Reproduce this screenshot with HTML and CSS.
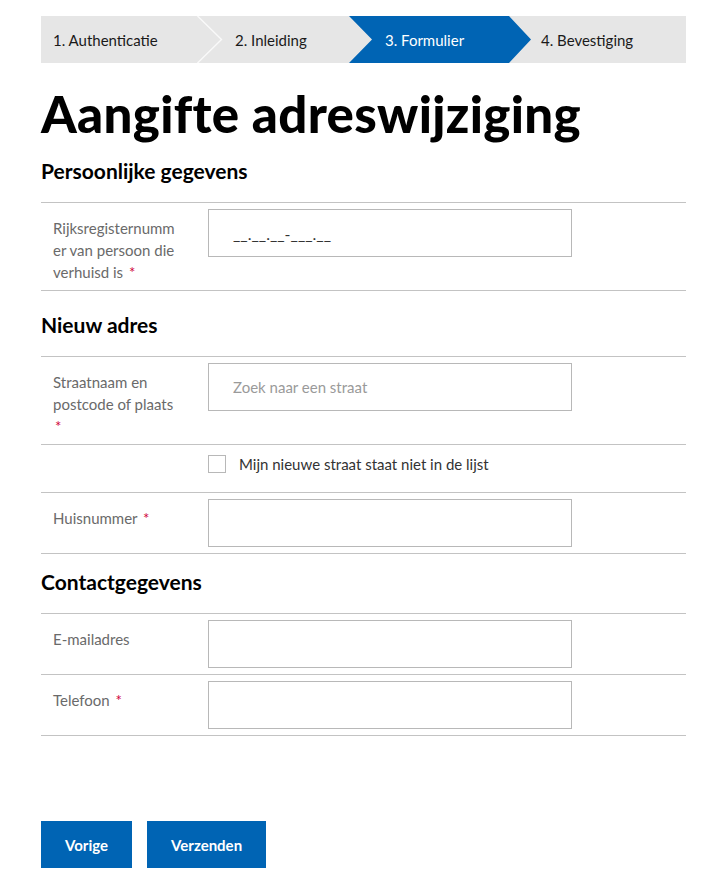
FILE: index.html
```html
<!DOCTYPE html>
<html lang="nl">
<head>
<meta charset="utf-8">
<title>Aangifte adreswijziging</title>
<link rel="stylesheet" href="styles.css">
</head>
<body>
<main class="page">
  <ol class="steps">
    <li class="step step-1">1. Authenticatie</li>
    <li class="step step-2">2. Inleiding</li>
    <li class="step step-3 is-active">3. Formulier</li>
    <li class="step step-4">4. Bevestiging</li>
  </ol>

  <h1 class="title">Aangifte adreswijziging</h1>

  <section class="fieldset">
    <h2 class="legend legend-first">Persoonlijke gegevens</h2>
    <div class="rows">
      <div class="row">
        <label class="label" for="rr">Rijksregisternummer van persoon die verhuisd is&nbsp;<span class="req">*</span></label>
        <div class="field"><input id="rr" class="input input-mask" type="text" value="__.__.__-___.__"></div>
      </div>
    </div>
  </section>

  <section class="fieldset">
    <h2 class="legend legend-mid">Nieuw adres</h2>
    <div class="rows">
      <div class="row">
        <label class="label" for="straat">Straatnaam en postcode of plaats <span class="req">*</span></label>
        <div class="field"><input id="straat" class="input" type="text" placeholder="Zoek naar een straat"></div>
      </div>
      <div class="row row-check">
        <div class="label"></div>
        <label class="check"><span class="box"></span><span class="check-text">Mijn nieuwe straat staat niet in de lijst</span></label>
      </div>
      <div class="row">
        <label class="label" for="nr">Huisnummer&nbsp;<span class="req">*</span></label>
        <div class="field"><input id="nr" class="input" type="text"></div>
      </div>
    </div>
  </section>

  <section class="fieldset">
    <h2 class="legend legend-last">Contactgegevens</h2>
    <div class="rows">
      <div class="row">
        <label class="label" for="mail">E-mailadres</label>
        <div class="field"><input id="mail" class="input" type="text"></div>
      </div>
      <div class="row">
        <label class="label" for="tel">Telefoon&nbsp;<span class="req">*</span></label>
        <div class="field"><input id="tel" class="input" type="text"></div>
      </div>
    </div>
  </section>

  <div class="actions">
    <button class="btn" type="button">Vorige</button>
    <button class="btn" type="button">Verzenden</button>
  </div>
</main>
</body>
</html>
```

FILE: styles.css
```css
* { box-sizing: border-box; }

html, body {
  margin: 0;
  padding: 0;
  background: #fff;
}

body {
  font-family: Lato, "Noto Sans", "Liberation Sans", sans-serif;
  color: #333;
}

.page {
  width: 645px;
  margin: 0 0 0 41px;
  padding-top: 16px;
}

/* Stepper */
.steps {
  list-style: none;
  margin: 0;
  padding: 0;
  display: flex;
  height: 47px;
  background: #e6e6e6;
}

.step {
  position: relative;
  display: flex;
  align-items: center;
  height: 47px;
  font-size: 15px;
  color: #1a1a1a;
  white-space: nowrap;
}

.step-1 { width: 156px; padding-left: 12px; }
.step-2 { width: 152px; padding-left: 38px; }
.step-3 { width: 182px; padding-left: 36px; }
.step-4 { flex: 1; padding-left: 32px; margin-left: -22px; }

.step-2::before {
  content: "";
  position: absolute;
  left: 0;
  top: 0;
  width: 26px;
  height: 47px;
  background: url("data:image/svg+xml,%3Csvg xmlns='http://www.w3.org/2000/svg' width='26' height='47'%3E%3Cpath d='M0.5 0 L24.5 23.5 L0.5 47' fill='none' stroke='%23fafafa' stroke-width='1.4'/%3E%3C/svg%3E") no-repeat;
}

.step-3.is-active {
  background: #0064b4;
  color: #fff;
  z-index: 1;
  clip-path: polygon(0 0, 160px 0, 100% 50%, 160px 100%, 0 100%, 23px 50%);
}

/* Title */
.title {
  margin: 23px 0 0;
  font-size: 51px;
  line-height: 56px;
  font-weight: 900;
  color: #000;
  letter-spacing: 0.3px;
}

.legend {
  margin: 0 0 19px;
  font-size: 21px;
  line-height: 24px;
  font-weight: 700;
  color: #000;
}

.legend-first { margin-top: 17px; }
.legend-mid { margin-top: 22px; }
.legend-last { margin-top: 16px; }

/* Rows */
.rows {
  border-bottom: 1px solid #c3c3c3;
}

.row {
  display: grid;
  grid-template-columns: 167px 364px;
  border-top: 1px solid #c3c3c3;
}

.label {
  padding: 14px 30px 7px 12px;
  font-size: 15px;
  line-height: 22px;
  color: #6a6a6a;
  overflow-wrap: anywhere;
}

.req {
  color: #cf0039;
  margin-left: 2px;
}

.field {
  padding: 6px 0;
}

.input {
  display: block;
  width: 364px;
  height: 48px;
  margin: 0;
  padding: 0 24px;
  border: 1px solid #b8b8b8;
  border-radius: 0;
  background: #fff;
  font-family: Lato, "Noto Sans", sans-serif;
  font-size: 15px;
  color: #333;
  outline: none;
}

.input::placeholder {
  color: #9a9a9a;
}

.input-mask {
  font-size: 16px;
  letter-spacing: 0;
}

.row-check .label { padding: 0; }

.check {
  display: flex;
  align-items: center;
  gap: 13px;
  padding: 10px 0 19px;
  font-size: 15px;
  line-height: 18px;
  color: #333;
}

.box {
  width: 18px;
  height: 18px;
  border: 1px solid #b8b8b8;
  background: #fff;
  flex: none;
}

/* Actions */
.actions {
  display: flex;
  gap: 15px;
  margin-top: 85px;
}

.btn {
  height: 47px;
  padding: 0 24px;
  border: 0;
  border-radius: 0;
  background: #0064b4;
  color: #fff;
  font-family: Lato, "Noto Sans", sans-serif;
  font-size: 15px;
  font-weight: 700;
  cursor: pointer;
}
```
